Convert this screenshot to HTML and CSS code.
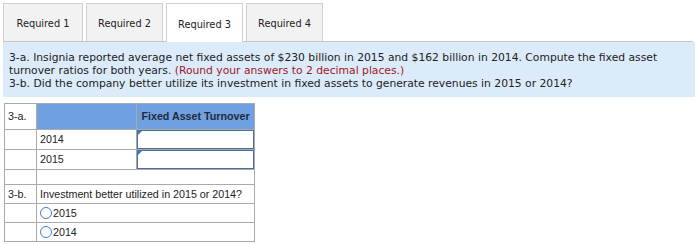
FILE: index.html
```html
<!DOCTYPE html>
<html>
<head>
<meta charset="utf-8">
<link rel="stylesheet" href="styles.css">
</head>
<body>
<div class="page">
  <div class="tabs">
    <div class="tab">Required 1</div>
    <div class="tab">Required 2</div>
    <div class="tab active">Required 3</div>
    <div class="tab">Required 4</div>
  </div>
  <div class="prompt">
    <p>3-a. Insignia reported average net fixed assets of $230 billion in 2015 and $162 billion in 2014. Compute the fixed asset<br>turnover ratios for both years. <span class="red">(Round your answers to 2 decimal places.)</span></p>
    <p>3-b. Did the company better utilize its investment in fixed assets to generate revenues in 2015 or 2014?</p>
  </div>
  <table class="grid">
    <colgroup>
      <col class="c1"><col class="c2"><col class="c3">
    </colgroup>
    <tr class="head">
      <td class="label">3-a.</td>
      <td class="blue"></td>
      <td class="blue hdr">Fixed Asset Turnover</td>
    </tr>
    <tr>
      <td></td>
      <td>2014</td>
      <td class="inp"><div class="box"></div></td>
    </tr>
    <tr>
      <td></td>
      <td>2015</td>
      <td class="inp"><div class="box"></div></td>
    </tr>
    <tr class="empty">
      <td></td><td colspan="2"></td>
    </tr>
    <tr>
      <td>3-b.</td>
      <td colspan="2">Investment better utilized in 2015 or 2014?</td>
    </tr>
    <tr>
      <td></td>
      <td colspan="2"><span class="radio"></span>2015</td>
    </tr>
    <tr>
      <td></td>
      <td colspan="2"><span class="radio"></span>2014</td>
    </tr>
  </table>
</div>
</body>
</html>
```

FILE: styles.css
```css
html, body {
  margin: 0;
  padding: 0;
  background: #fff;
}
.page {
  padding: 3px 5px 0 3px;
  font-family: "DejaVu Sans", Verdana, sans-serif;
  color: #222;
}
.tabs {
  display: flex;
  gap: 3px;
  border-bottom: 1px solid #c4c4c4;
  height: 38px;
  align-items: stretch;
  margin-right: 2px;
}
.tab {
  width: 77px;
  box-sizing: border-box;
  border: 1px solid #cfcfcf;
  border-bottom: none;
  background: #f2f2f2;
  font-size: 9.8px;
  display: flex;
  align-items: center;
  justify-content: center;
  padding-top: 2px;
  color: #222;
}
.tab:first-child {
  width: 80px;
}
.tab.active {
  background: #fff;
  height: 39px;
  position: relative;
  z-index: 1;
}
.prompt {
  background: #dcebf9;
  padding: 9px 6px 6px 6px;
  font-size: 10.75px;
  line-height: 13.2px;
}
.prompt p {
  margin: 0;
  white-space: nowrap;
}
.red {
  color: #a0171b;
}
.grid {
  margin-top: 6px;
  margin-left: 1px;
  border-collapse: collapse;
  font-family: "Liberation Sans", Arial, sans-serif;
  font-size: 10.7px;
  color: #222;
  table-layout: fixed;
  width: 250px;
}
.c1 { width: 32px; }
.c2 { width: 100px; }
.c3 { width: 118px; }
.grid td {
  border: 1px solid #aaa;
  height: 18px;
  padding: 0 3px;
  vertical-align: middle;
  white-space: nowrap;
}
.grid tr.head td {
  height: 25px;
}
.grid tr.empty td {
  height: 14px;
}
.blue {
  background: #6fa0e2;
}
.hdr {
  font-weight: bold;
  text-align: center;
  color: #1f2a3a;
}
.grid td.inp {
  padding: 0;
  position: relative;
}
.box {
  height: 17px;
  border: 1px solid #4a6f9c;
  background: #fff;
  position: relative;
}
.box::before {
  content: "";
  position: absolute;
  left: 0;
  top: 0;
  border-left: 4px solid #3b78d0;
  border-bottom: 4px solid transparent;
}
.radio {
  display: inline-block;
  width: 10px;
  height: 10px;
  border: 1.5px solid #3f7fd6;
  border-radius: 50%;
  vertical-align: -2px;
  margin-right: 1px;
}
```
